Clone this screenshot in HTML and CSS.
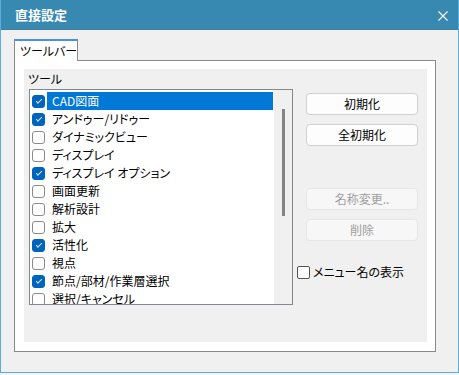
FILE: index.html
```html
<!DOCTYPE html>
<html lang="ja">
<head>
    <meta charset="UTF-8">
    <title>直接設定</title>
    <link rel="stylesheet" href="styles.css">
</head>
<body>

<div class="window">
    <div class="titlebar">
        <span class="title">直接設定</span>
        <svg class="close" width="10" height="10" viewBox="0 0 10 10">
            <path d="M0.5 0.5 L9.5 9.5 M9.5 0.5 L0.5 9.5" stroke="#fff" stroke-width="1.1" fill="none"/>
        </svg>
    </div>

    <div class="content">
        <div class="tabs">
            <div class="tab">ツールバー</div>
        </div>

        <div class="panel">
            <div class="group">
                <div class="group-label">ツール</div>
                <div class="group-body">
                    <div class="listbox">
                        <ul class="items">
                            <li class="selected"><span class="check on"></span><span class="text">CAD図面</span></li>
                            <li><span class="check on"></span><span class="text">アンドゥー/リドゥー</span></li>
                            <li><span class="check"></span><span class="text">ダイナミックビュー</span></li>
                            <li><span class="check"></span><span class="text">ディスプレイ</span></li>
                            <li><span class="check on"></span><span class="text">ディスプレイ オプション</span></li>
                            <li><span class="check"></span><span class="text">画面更新</span></li>
                            <li><span class="check"></span><span class="text">解析設計</span></li>
                            <li><span class="check"></span><span class="text">拡大</span></li>
                            <li><span class="check on"></span><span class="text">活性化</span></li>
                            <li><span class="check"></span><span class="text">視点</span></li>
                            <li><span class="check on"></span><span class="text">節点/部材/作業層選択</span></li>
                            <li><span class="check"></span><span class="text">選択/キャンセル</span></li>
                        </ul>
                        <div class="scrollbar"><div class="thumb"></div></div>
                    </div>

                    <div class="actions">
                        <button class="btn">初期化</button>
                        <button class="btn">全初期化</button>
                        <button class="btn disabled spaced">名称変更..</button>
                        <button class="btn disabled">削除</button>
                        <label class="option"><span class="box"></span>メニュー名の表示</label>
                    </div>
                </div>
            </div>
        </div>
    </div>
</div>

</body>
</html>
```

FILE: styles.css
```css
body {
    margin: 0;
    background: #f4f4f4;
    font-family: 'Noto Sans CJK JP', 'Noto Sans', sans-serif;
    font-size: 12px;
    font-feature-settings: "palt";
    color: #000;
}
.window {
    width: 459px;
    height: 373px;
    box-sizing: border-box;
    border: 1px solid #5aaedb;
    border-top: none;
    background: #f0f0f0;
}
.titlebar {
    height: 29px;
    border-bottom: 1px solid #4f7d93;
    background: #3789b2;
    display: flex;
    align-items: center;
    justify-content: space-between;
    padding: 0 10px 0 14px;
}
.title {
    color: #fff;
    font-size: 13px;
    font-weight: bold;
    line-height: 29px;
    margin-top: -1px;
    font-feature-settings: normal;
}
.close {
    margin-top: 3px;
}
.content {
    padding: 9px 0 0 13px;
}
.tabs {
    display: flex;
}
.tab {
    position: relative;
    z-index: 1;
    margin-bottom: -1px;
    width: 64px;
    height: 22px;
    border: 1px solid #898989;
    border-top: 2px solid #4a8fe4;
    border-bottom: none;
    background: #fff;
    padding-left: 5px;
    box-sizing: border-box;
    line-height: 19px;
    white-space: nowrap;
}
.panel {
    width: 422px;
    height: 292px;
    box-sizing: border-box;
    border: 1px solid #898989;
    background: #fff;
    padding: 8px 8px 9px 9px;
}
.group {
    height: 273px;
    background: #f0f0f0;
    padding-left: 4px;
}
.group-label {
    height: 20px;
    line-height: 18px;
    padding-top: 1px;
    box-sizing: border-box;
}
.group-body {
    display: flex;
    padding-left: 1px;
}
.listbox {
    width: 264px;
    height: 216px;
    box-sizing: border-box;
    border: 1px solid #828790;
    background: #fff;
    display: flex;
    overflow: hidden;
}
.items {
    list-style: none;
    margin: 0;
    padding: 2px 0 0 2px;
    width: 242px;
}
.items li {
    display: flex;
    align-items: center;
    height: 18px;
}
.check {
    width: 13px;
    height: 13px;
    box-sizing: border-box;
    border: 1px solid #8a8a8a;
    border-radius: 3px;
    background: #fff;
    flex: none;
    display: flex;
    align-items: center;
    justify-content: center;
}
.check.on {
    background: #0064bf;
    border-color: #0064bf;
}
.check.on::after {
    content: "";
    width: 5px;
    height: 2px;
    border-left: 1px solid #d8e8f6;
    border-bottom: 1px solid #d8e8f6;
    transform: rotate(-45deg);
    margin-top: -1px;
}
.text {
    flex: 1;
    height: 18px;
    line-height: 18px;
    margin-left: 2px;
    padding-left: 5px;
    white-space: nowrap;
}
.selected .text {
    background: #0078d7;
    color: #fff;
}
.scrollbar {
    width: 18px;
    margin-left: 1px;
    background: #f0f0f0;
}
.thumb {
    width: 3px;
    height: 107px;
    margin: 19px 0 0 8px;
    background: #858585;
}
.actions {
    display: flex;
    flex-direction: column;
    margin-left: 4px;
    padding-top: 4px;
}
.btn {
    width: 112px;
    height: 22px;
    margin: 0 0 9px 9px;
    border: 1px solid #d0d0d0;
    border-radius: 4px;
    background: #fdfdfd;
    font-family: inherit;
    font-size: 12px;
    font-feature-settings: "palt";
    color: #000;
    padding: 0;
    line-height: 20px;
}
.btn.disabled {
    color: #9d9d9d;
    background: #f7f7f7;
    border-color: #e6e6e6;
}
.btn.spaced {
    margin-top: 33px;
}
.option {
    display: flex;
    align-items: center;
    margin-top: 15px;
    height: 14px;
    line-height: 14px;
}
.box {
    width: 13px;
    height: 13px;
    box-sizing: border-box;
    border: 1px solid #555;
    border-radius: 2px;
    background: #fff;
    margin-right: 3px;
}
```
